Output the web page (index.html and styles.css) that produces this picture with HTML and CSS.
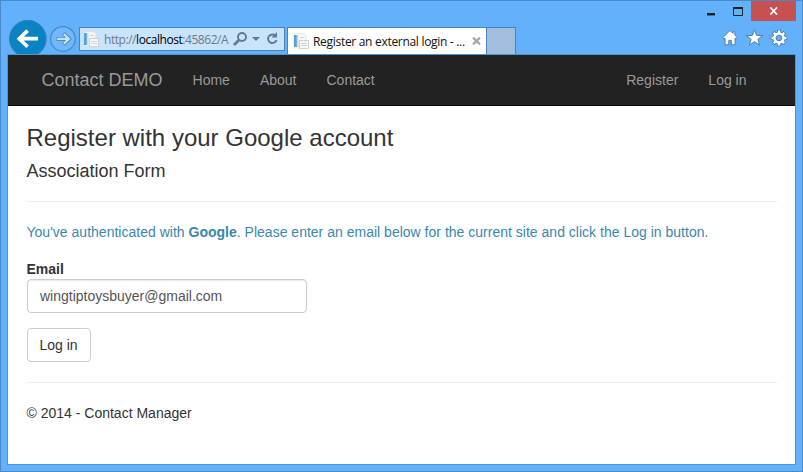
FILE: index.html
```html
<!DOCTYPE html>
<html lang="en">
<head>
<meta charset="utf-8">
<title>Register an external login - Contact Manager</title>
<link rel="stylesheet" href="styles.css">
</head>
<body>
<div class="window">
  <div class="titlebar">
    <svg class="caption" width="44" height="20" viewBox="0 0 44 20"><path d="M0 12h8v2.500H0z" fill="#222"/><path d="M26.500 7v7.500h9V7z" fill="none" stroke="#222"/><path d="M26 6h10v2H26z" fill="#222"/></svg>
    <div class="close"><svg width="10" height="8" viewBox="0 0 10 8"><path d="M1.400.5l6.600 7M8 .5l-6.600 7" stroke="#fff" stroke-width="1.700"/></svg></div>
  </div>
  <div class="toolbar">
    <svg class="history" width="70" height="34" viewBox="0 0 70 34">
      <circle cx="19.800" cy="18.700" r="18.400" fill="#0a83c4" stroke="#3f7fae" stroke-width="1"/>
      <path d="M30 18.700H12M19.600 10.600l-8.300 8.100 8.300 8.100" fill="none" stroke="#fff" stroke-width="3.700"/>
      <circle cx="54.900" cy="18.900" r="12.300" fill="#70b8fc" stroke="#4b88c0" stroke-width="1.200"/>
      <path d="M48.500 18.900h11.500M55.300 13.400l5.800 5.500-5.800 5.500" fill="none" stroke="#4f8abd" stroke-width="4"/>
      <path d="M49.200 18.900h11M55.800 14l5.100 4.900-5.100 4.900" fill="none" stroke="#c6e2fb" stroke-width="2.200"/>
    </svg>
    <div class="address">
      <svg class="favicon" width="17" height="17" viewBox="0 0 17 17"><path d="M1 .5h10l2 2V15H1z" fill="#f4f4f4" stroke="#dce1e5"/><path d="M1 2h2.800v12H1z" fill="#55a3d3"/><path d="M4 2h1.500v12H4z" fill="#c5dceb"/><path d="M6.500 7.500H15.500V15.500h-9z" fill="#f7f7f7" stroke="#cdd1d5"/><path d="M8 10.500h6M8 12.500h6M7 4.500h4" stroke="#d3d6d9"/></svg>
      <span class="url">http://<b>localhost</b>:45862/A</span>
      <svg width="50" height="16" viewBox="0 0 50 16" fill="none" stroke="#607b91"><circle cx="9" cy="6" r="4" stroke-width="1.900"/><path d="M6 9l-5 5" stroke-width="2.600"/><path d="M19 6h8l-4 4z" fill="#607b91" stroke="none"/><path d="M42.300 4.500A4.300 4.300 0 1 0 43.500 9" stroke-width="2"/><path d="M44 1v5.500h-5.500z" fill="#607b91" stroke="none"/></svg>
    </div>
    <div class="tab">
      <svg class="favicon" width="17" height="17" viewBox="0 0 17 17"><path d="M1 .5h10l2 2V15H1z" fill="#f7f7f7" stroke="#e3e6e8"/><path d="M1 2h2.800v12H1z" fill="#55a3d3"/><path d="M4 2h1.500v12H4z" fill="#c5dceb"/><path d="M6.500 7.500H15.500V15.500h-9z" fill="#f7f7f7" stroke="#cdd1d5"/><path d="M8 10.500h6M8 12.500h6M7 4.500h4" stroke="#d3d6d9"/></svg>
      <span class="tab-title">Register an external login - ...</span>
      <svg width="9" height="8" viewBox="0 0 9 8"><path d="M1 .6l7 6.800M8 .6L1 7.400" stroke="#a5a5a5" stroke-width="2.200"/></svg>
    </div>
    <div class="new-tab"></div>
    <svg class="tools" width="66" height="18" viewBox="0 0 66 18" fill="#fff" stroke="#4b7fae" stroke-width="1">
      <path d="M8 1.400L.8 8.700l1.100 1.200 1.100-.8v6.700h3.800v-4.400h2.500v4.400h3.800V9.100l1.100.8 1.100-1.200-2.400-2.400V2.800h-2v1.500z"/>
      <path d="M32.500.8l2.100 5.600 6 .2-4.700 3.700 1.700 5.800-5.100-3.400-5.100 3.400 1.700-5.800-4.700-3.700 6-.2z"/>
      <g fill="none">
        <path d="M57 .8v16.400M48.800 9h16.400M51.200 3.200l11.600 11.600M62.800 3.200L51.200 14.800" stroke-width="4"/>
        <circle cx="57" cy="9" r="4.400" stroke-width="4"/>
        <path d="M57 1.500v15M49.500 9h15M51.700 3.700l10.600 10.600M62.300 3.700L51.700 14.300" stroke="#fff" stroke-width="2.300"/>
        <circle cx="57" cy="9" r="4.500" stroke="#fff" stroke-width="2.500"/>
        <circle cx="57" cy="9" r="2.800" fill="#64b1fb"/>
      </g>
    </svg>
  </div>
  <main class="page">
    <nav class="navbar">
      <a class="brand">Contact DEMO</a>
      <a>Home</a><a>About</a><a>Contact</a>
      <a class="right">Register</a><a>Log in</a>
    </nav>
    <div class="content">
      <h2>Register with your Google account</h2>
      <h4>Association Form</h4>
      <hr>
      <p class="info">You've authenticated with <strong>Google</strong>. Please enter an email below for the current site and click the Log in button.</p>
      <label for="email">Email</label>
      <input id="email" type="text" value="wingtiptoysbuyer@gmail.com">
      <button type="button">Log in</button>
      <hr>
      <footer>© 2014 - Contact Manager</footer>
    </div>
  </main>
</div>
</body>
</html>
```
FILE: styles.css
```css
* { box-sizing: border-box; }
body { margin: 0; font: 14px/20px "Liberation Sans", Arial, sans-serif; color: #333; overflow: hidden; }
.window { width: 803px; height: 472px; border: 1px solid #4889c9; background: #64b1fb; display: flex; flex-direction: column; }
.titlebar { height: 19px; flex: none; display: flex; justify-content: flex-end; padding-right: 6px; }
.close { width: 45px; height: 20px; background: #c75050; display: flex; justify-content: center; align-items: center; padding-left: 1px; }
.caption { margin-right: 0; }
.toolbar { height: 34px; flex: none; display: flex; align-items: flex-start; padding: 0 7px; }
.history { flex: none; margin-right: 1px; }
.address { flex: none; width: 206px; height: 24px; margin-top: 7px; border: 1px solid #4a83b8; background: #c8e3fc; display: flex; align-items: center; padding-left: 3px; }
.favicon { flex: none; }
.url, .tab-title { font: 12px/20px "Open Sans", "Noto Sans", sans-serif; white-space: nowrap; }
.url { width: 125px; margin: 1px 4px 0 4px; color: #6c7b88; letter-spacing: -.45px; flex: none; }
.url b { font-weight: 400; color: #000; }
.tab { flex: none; width: 200px; height: 27px; margin: 7px 0 0 2px; border: 1px solid #4a83b8; border-bottom: 0; background: #fff; display: flex; align-items: center; padding-left: 5px; }
.tab-title { width: 154px; margin: 1px 5px 0 3px; color: #111; letter-spacing: -.3px; }
.new-tab { width: 29px; height: 27px; margin-top: 7px; border: 1px solid #4a83b8; border-left: 0; border-bottom: 0; background: #a1bedc; }
.tools { margin: 9px 7px 0 auto; }
.page { width: 789px; height: 411px; margin-left: 6px; border: 1px solid #4b96d7; background: #fff; flex: none; }
.navbar { height: 51px; background: #222; border-bottom: 1px solid #080808; display: flex; align-items: center; padding: 0 48.5px 0 33.5px; gap: 30px; color: #999; }
.navbar .brand { font-size: 18px; }
.navbar .right { margin-left: auto; }
.content { padding: 18px 18px 0 19px; }
h2 { font-size: 24px; line-height: 28px; font-weight: 400; margin: 0 0 9px -.5px; }
h4 { font-size: 18px; line-height: 20px; font-weight: 400; margin: 0 0 0 -.5px; }
hr { border: 0; border-top: 1px solid #eee; margin: 20px 0; }
.info { color: #3a87ad; margin: 0 0 17px -.5px; white-space: nowrap; letter-spacing: .01px; }
label { display: block; font-weight: 700; line-height: 20px; margin-left: -.5px; }
input { display: block; width: 280px; height: 34px; padding: 6px 12px; border: 1px solid #ccc; border-radius: 4px; box-shadow: inset 0 1px 1px rgba(0,0,0,.075); font: inherit; color: #555; }
button { display: block; width: 64px; height: 34px; margin-top: 15px; padding: 0 1px 0 0; border: 1px solid #ccc; border-radius: 4px; background: #fff; color: #333; font: inherit; }
footer { margin-left: -.5px; }
```
